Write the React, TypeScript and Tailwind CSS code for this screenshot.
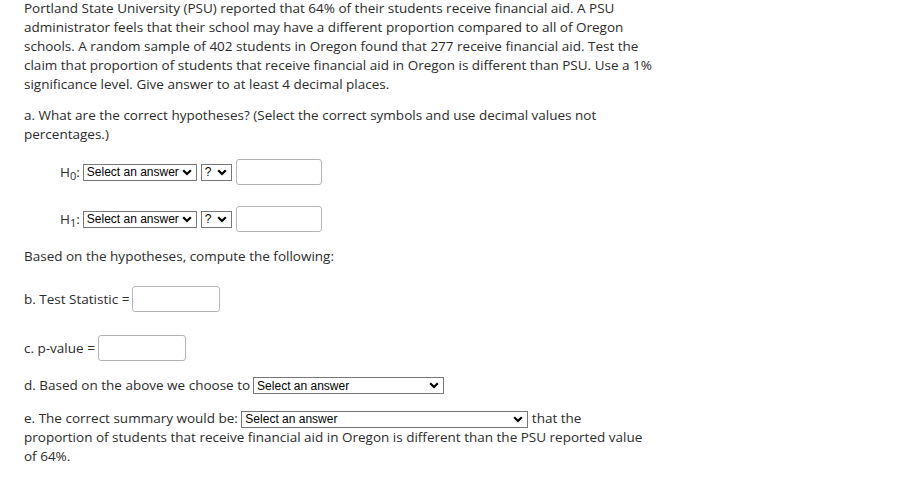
import React from "react";

const Chevron = () => (
  <svg width="10" height="7" viewBox="0 0 10 7" className="shrink-0">
    <polyline points="1.2,1.2 5,5 8.8,1.2" fill="none" stroke="#000" strokeWidth="2.2" />
  </svg>
);

const Sel = ({ w, label }: { w: string; label: string }) => (
  <span
    className={`inline-flex items-center justify-between h-[17px] border border-[#767676] bg-white pl-[3px] pr-[4px] align-middle text-[12px] leading-none text-black tracking-normal font-['Liberation_Sans',Arial,sans-serif] ${w}`}
  >
    <span>{label}</span>
    <Chevron />
  </span>
);

const Box = ({ w }: { w: string }) => (
  <span className={`inline-block h-[26px] rounded-[3px] border border-[#b5b5b5] bg-white align-middle ${w}`} />
);

export default function App() {
  return (
    <div className="w-[910px] h-[478px] bg-white text-[#2b2b2b] font-['Open_Sans',sans-serif] text-[13.5px] leading-[19px] pl-[24px]">
      <p className="-mt-[1px]">
        Portland State University (PSU) reported that 64% of their students receive financial aid. A PSU
        <br />
        administrator feels that their school may have a different proportion compared to all of Oregon
        <br />
        schools. A random sample of 402 students in Oregon found that 277 receive financial aid. Test the
        <br />
        claim that proportion of students that receive financial aid in Oregon is different than PSU. Use a 1%
        <br />
        significance level. Give answer to at least 4 decimal places.
      </p>
      <p className="mt-[12px]">
        a. What are the correct hypotheses? (Select the correct symbols and use decimal values not
        <br />
        percentages.)
      </p>
      <div className="mt-[15px] ml-[36px] flex items-center h-[26px]">
        <span className="mr-[3px]">
          H<sub className="text-[11px] relative top-[3px] align-baseline">0</sub>:
        </span>
        <Sel w="w-[114px]" label="Select an answer" />
        <span className="w-[4px]" />
        <Sel w="w-[31px]" label="?" />
        <span className="w-[4px]" />
        <Box w="w-[86px]" />
      </div>
      <div className="mt-[21px] ml-[36px] flex items-center h-[26px]">
        <span className="mr-[3px]">
          H<sub className="text-[11px] relative top-[3px] align-baseline">1</sub>:
        </span>
        <Sel w="w-[114px]" label="Select an answer" />
        <span className="w-[4px]" />
        <Sel w="w-[31px]" label="?" />
        <span className="w-[4px]" />
        <Box w="w-[86px]" />
      </div>
      <p className="mt-[15px]">Based on the hypotheses, compute the following:</p>
      <div className="mt-[20px] flex items-center h-[26px]">
        <span className="mr-[3px]">b. Test Statistic =</span>
        <Box w="w-[88px]" />
      </div>
      <div className="mt-[23px] flex items-center h-[26px]">
        <span className="mr-[3px]">c. p-value =</span>
        <Box w="w-[88px]" />
      </div>
      <div className="mt-[15px] flex items-center h-[19px]">
        <span className="mr-[3px]">d. Based on the above we choose to</span>
        <Sel w="w-[191px]" label="Select an answer" />
      </div>
      <p className="mt-[14px]">
        e. The correct summary would be: <Sel w="w-[287px]" label="Select an answer" /> that the
        <br />
        proportion of students that receive financial aid in Oregon is different than the PSU reported value
        <br />
        of 64%.
      </p>
    </div>
  );
}
